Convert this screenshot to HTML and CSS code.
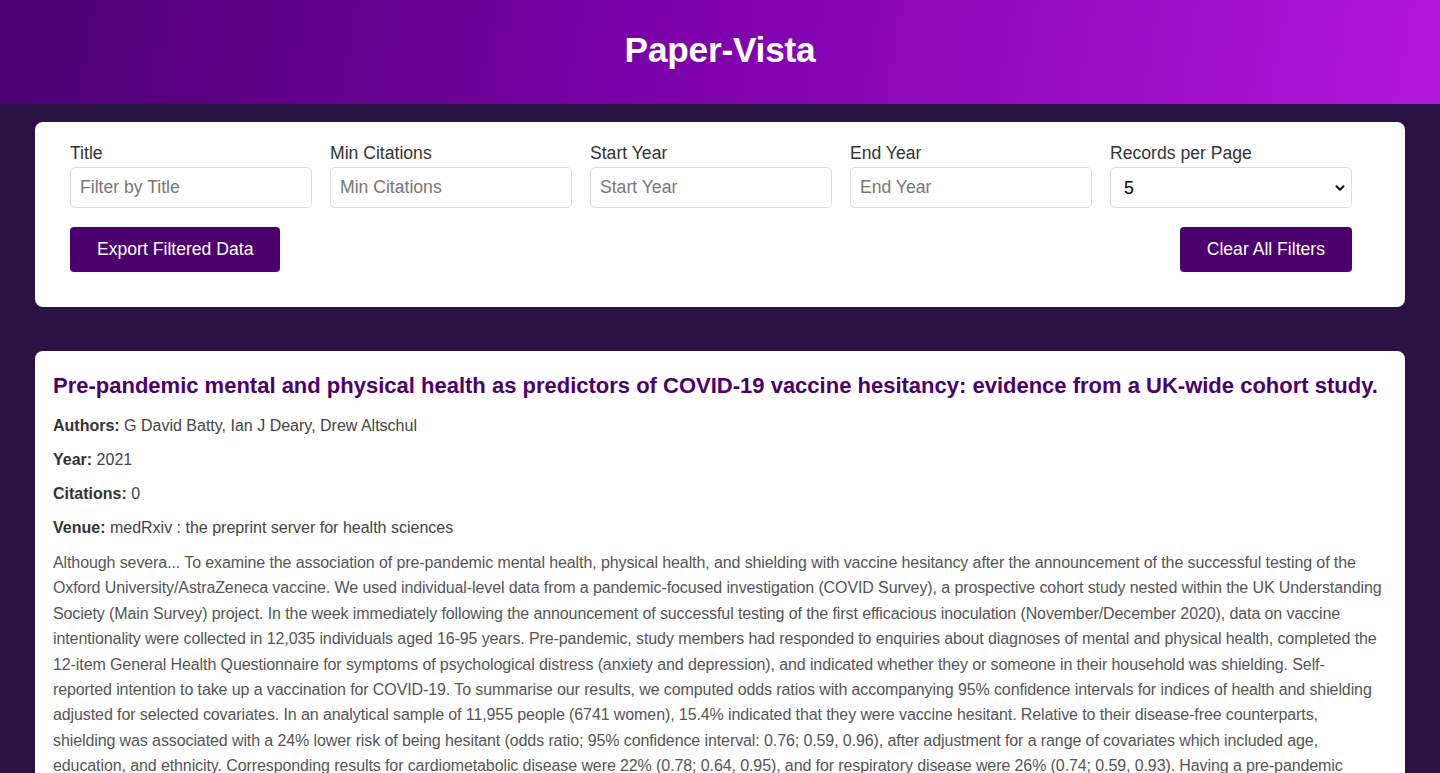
FILE: index.html
```html
<!DOCTYPE html>
<html lang="en">
<head>
<meta charset="utf-8">
<title>Paper-Vista</title>
<link rel="stylesheet" href="styles.css">
</head>
<body>
<header class="site-header">
  <h1 class="brand">Paper-Vista</h1>
</header>
<main class="content">
  <section class="filters">
    <div class="filter-grid">
      <div class="field">
        <label class="field-label" for="f-title">Title</label>
        <input class="field-input" id="f-title" type="text" placeholder="Filter by Title">
      </div>
      <div class="field">
        <label class="field-label" for="f-cit">Min Citations</label>
        <input class="field-input" id="f-cit" type="text" placeholder="Min Citations">
      </div>
      <div class="field">
        <label class="field-label" for="f-start">Start Year</label>
        <input class="field-input" id="f-start" type="text" placeholder="Start Year">
      </div>
      <div class="field">
        <label class="field-label" for="f-end">End Year</label>
        <input class="field-input" id="f-end" type="text" placeholder="End Year">
      </div>
      <div class="field">
        <label class="field-label" for="f-rpp">Records per Page</label>
        <div class="select-wrap">
          <select class="field-input field-select" id="f-rpp">
            <option>5</option>
            <option>10</option>
            <option>20</option>
          </select>
          <svg class="chevron" width="10" height="8" viewBox="0 0 10 8" aria-hidden="true"><path d="M1.5 2.2 L5 5.7 L8.5 2.2" fill="none" stroke="#111" stroke-width="2" stroke-linecap="round" stroke-linejoin="round"/></svg>
        </div>
      </div>
    </div>
    <div class="actions">
      <button class="btn">Export Filtered Data</button>
      <button class="btn">Clear All Filters</button>
    </div>
  </section>

  <article class="paper">
    <h2 class="paper-title">Pre-pandemic mental and physical health as predictors of COVID-19 vaccine hesitancy: evidence from a UK-wide cohort study.</h2>
    <p class="meta"><strong>Authors:</strong> G David Batty, Ian J Deary, Drew Altschul</p>
    <p class="meta"><strong>Year:</strong> 2021</p>
    <p class="meta"><strong>Citations:</strong> 0</p>
    <p class="meta"><strong>Venue:</strong> medRxiv : the preprint server for health sciences</p>
    <p class="abstract">Although severa... To examine the association of pre-pandemic mental health, physical health, and shielding with vaccine hesitancy after the announcement of the successful testing of the<br>Oxford University/AstraZeneca vaccine. We used individual-level data from a pandemic-focused investigation (COVID Survey), a prospective cohort study nested within the UK Understanding<br>Society (Main Survey) project. In the week immediately following the announcement of successful testing of the first efficacious inoculation (November/December 2020), data on vaccine<br>intentionality were collected in 12,035 individuals aged 16-95 years. Pre-pandemic, study members had responded to enquiries about diagnoses of mental and physical health, completed the<br>12-item General Health Questionnaire for symptoms of psychological distress (anxiety and depression), and indicated whether they or someone in their household was shielding. Self-<br>reported intention to take up a vaccination for COVID-19. To summarise our results, we computed odds ratios with accompanying 95% confidence intervals for indices of health and shielding<br>adjusted for selected covariates. In an analytical sample of 11,955 people (6741 women), 15.4% indicated that they were vaccine hesitant. Relative to their disease-free counterparts,<br>shielding was associated with a 24% lower risk of being hesitant (odds ratio; 95% confidence interval: 0.76; 0.59, 0.96), after adjustment for a range of covariates which included age,<br>education, and ethnicity. Corresponding results for cardiometabolic disease were 22% (0.78; 0.64, 0.95), and for respiratory disease were 26% (0.74; 0.59, 0.93). Having a pre-pandemic<br>diagnosis of depression or anxiety was not associated with vaccine hesitancy, nor was psychological distress. In the present study, individuals with cardiometabolic and respiratory disease, and those who were shielding, were less likely to report vaccine hesitancy.</p>
  </article>
</main>
</body>
</html>
```

FILE: styles.css
```css
* { box-sizing: border-box; }

html, body {
  margin: 0;
  padding: 0;
}

body {
  background: #2a1245;
  font-family: "Liberation Sans", Arial, Helvetica, sans-serif;
  color: #333;
}

.site-header {
  height: 104px;
  display: flex;
  align-items: center;
  justify-content: center;
  background: linear-gradient(100deg, #4a006f 0%, #7a00a8 45%, #b116d9 100%);
}

.brand {
  margin: 0 0 4px;
  color: #fff;
  font-size: 35.2px;
  font-weight: 700;
  letter-spacing: -0.2px;
}

.content {
  padding: 18px 35px 40px;
  display: flex;
  flex-direction: column;
  gap: 44px;
}

.filters {
  background: #fff;
  border-radius: 8px;
  padding: 21px 53px 35px 35px;
  display: flex;
  flex-direction: column;
  gap: 19px;
}

.filter-grid {
  display: grid;
  grid-template-columns: repeat(5, 1fr);
  column-gap: 18px;
}

.field {
  display: flex;
  flex-direction: column;
  gap: 4px;
}

.field-label {
  font-size: 17.6px;
  line-height: 20px;
  color: #333;
}

.field-input {
  height: 41px;
  width: 100%;
  border: 1px solid #ddd;
  border-radius: 5px;
  padding: 0 9px;
  font-family: "Liberation Sans", Arial, Helvetica, sans-serif;
  font-size: 17.6px;
  color: #111;
  background: #fff;
  outline: none;
}

.field-input::placeholder {
  color: #777;
}

.select-wrap {
  position: relative;
}

.field-select {
  appearance: none;
  -webkit-appearance: none;
  padding-left: 13px;
  color: #000;
}

.chevron {
  position: absolute;
  right: 7px;
  top: 17px;
  pointer-events: none;
}

.actions {
  display: flex;
  justify-content: space-between;
  align-items: center;
}

.btn {
  height: 45px;
  padding: 0 27px;
  border: none;
  border-radius: 4px;
  background: #4b006e;
  color: #fff;
  font-family: "Liberation Sans", Arial, Helvetica, sans-serif;
  font-size: 17.6px;
  cursor: pointer;
}

.paper {
  background: #fff;
  border-radius: 8px;
  padding: 21px 18px 24px;
}

.paper-title {
  margin: 0 0 17px;
  font-size: 22px;
  line-height: 28px;
  font-weight: 700;
  color: #4b006e;
}

.meta {
  margin: 16px 0 0;
  font-size: 16px;
  line-height: 18px;
  color: #444;
}

.paper-title + .meta {
  margin-top: 17px;
}

.meta strong {
  color: #333;
}

.abstract {
  margin: 13px 0 0;
  font-size: 16px;
  line-height: 25.4px;
  letter-spacing: -0.1px;
  color: #555;
}
```
